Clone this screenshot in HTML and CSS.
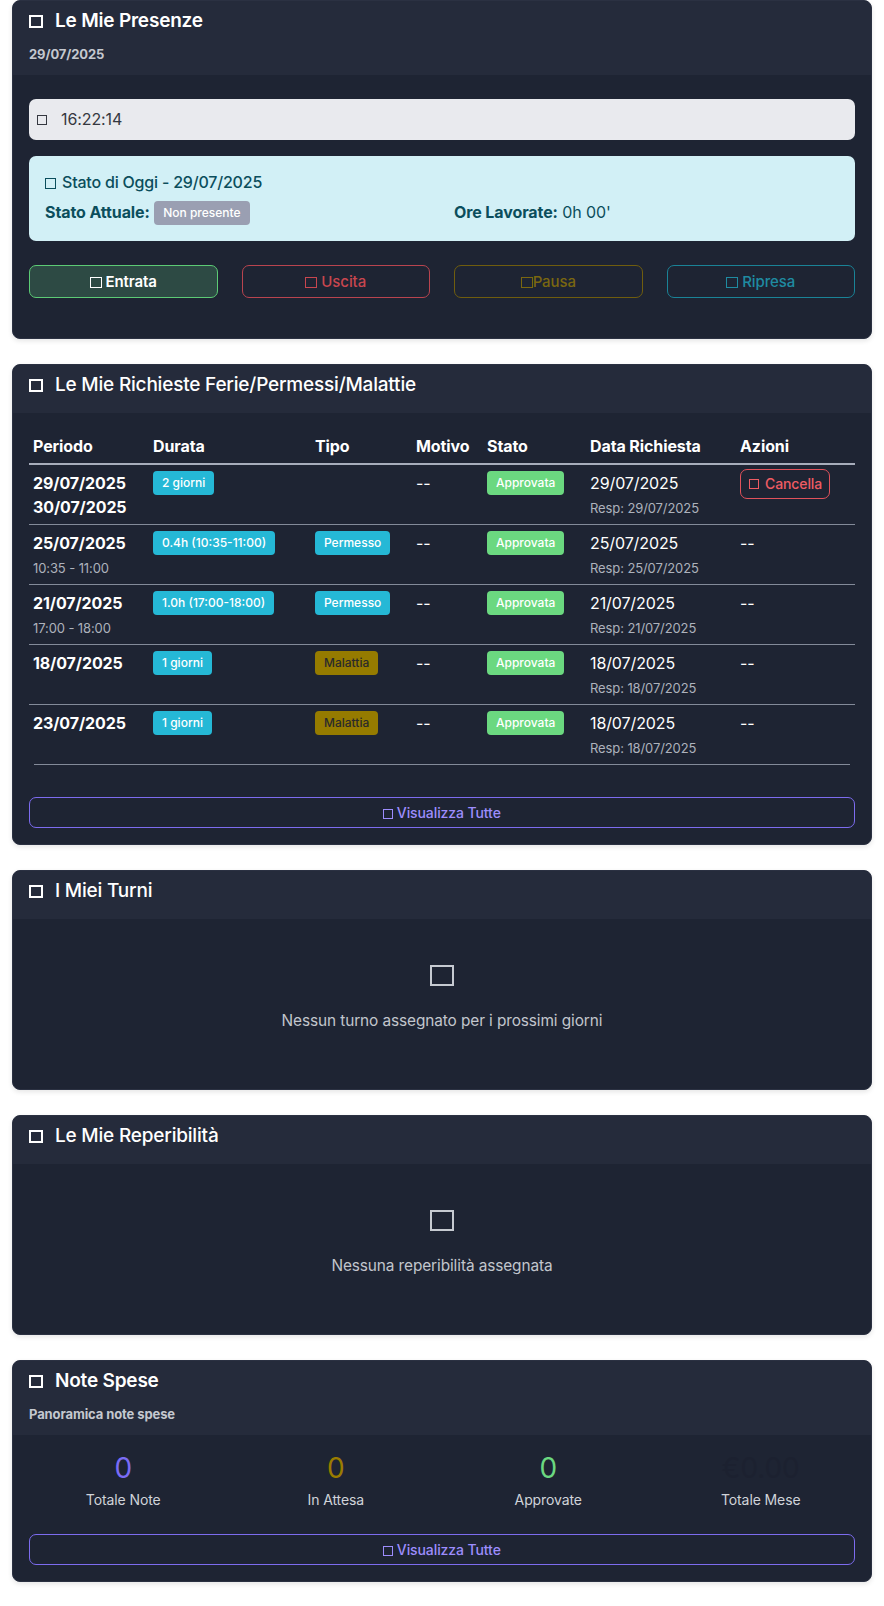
FILE: index.html
```html
<!DOCTYPE html>
<html lang="it">
<head>
<meta charset="utf-8">
<title>Dashboard Dipendente</title>
<link rel="stylesheet" href="styles.css">
</head>
<body>
<main class="page">

  <section class="card">
    <header class="card-header">
      <h5 class="card-title title-strong"><span class="ico ico-title"></span>Le Mie Presenze</h5>
      <p class="card-sub">29/07/2025</p>
    </header>
    <div class="card-body body-lg">
      <div class="clock"><span class="ico ico-clock"></span>16:22:14</div>
      <div class="alert">
        <h6 class="alert-title"><span class="ico ico-alert"></span>Stato di Oggi - 29/07/2025</h6>
        <div class="alert-row">
          <div><strong>Stato Attuale:</strong> <span class="badge badge-gray">Non presente</span></div>
          <div><strong>Ore Lavorate:</strong> 0h 00'</div>
        </div>
      </div>
      <div class="grid4 btn-row">
        <button class="btn btn-entrata"><span class="ico ico-btn"></span> Entrata</button>
        <button class="btn btn-uscita"><span class="ico ico-btn"></span> Uscita</button>
        <button class="btn btn-pausa"><span class="ico ico-btn"></span>Pausa</button>
        <button class="btn btn-ripresa"><span class="ico ico-btn"></span> Ripresa</button>
      </div>
    </div>
  </section>

  <section class="card">
    <header class="card-header">
      <h5 class="card-title"><span class="ico ico-title"></span>Le Mie Richieste Ferie/Permessi/Malattie</h5>
    </header>
    <div class="card-body">
      <table class="table">
        <colgroup>
          <col class="c-periodo"><col class="c-durata"><col class="c-tipo"><col class="c-motivo"><col class="c-stato"><col class="c-data"><col class="c-azioni">
        </colgroup>
        <thead>
          <tr><th>Periodo</th><th>Durata</th><th>Tipo</th><th>Motivo</th><th>Stato</th><th>Data Richiesta</th><th>Azioni</th></tr>
        </thead>
        <tbody>
          <tr>
            <td><strong>29/07/2025</strong><br><strong>30/07/2025</strong></td>
            <td><span class="badge badge-info">2 giorni</span></td>
            <td></td>
            <td>--</td>
            <td><span class="badge badge-success">Approvata</span></td>
            <td>29/07/2025<br><small class="muted">Resp: 29/07/2025</small></td>
            <td><button class="btn-cancel"><span class="ico ico-cancel"></span>Cancella</button></td>
          </tr>
          <tr>
            <td><strong>25/07/2025</strong><br><small class="muted">10:35 - 11:00</small></td>
            <td><span class="badge badge-info">0.4h (10:35-11:00)</span></td>
            <td><span class="badge badge-info">Permesso</span></td>
            <td>--</td>
            <td><span class="badge badge-success">Approvata</span></td>
            <td>25/07/2025<br><small class="muted">Resp: 25/07/2025</small></td>
            <td>--</td>
          </tr>
          <tr>
            <td><strong>21/07/2025</strong><br><small class="muted">17:00 - 18:00</small></td>
            <td><span class="badge badge-info">1.0h (17:00-18:00)</span></td>
            <td><span class="badge badge-info">Permesso</span></td>
            <td>--</td>
            <td><span class="badge badge-success">Approvata</span></td>
            <td>21/07/2025<br><small class="muted">Resp: 21/07/2025</small></td>
            <td>--</td>
          </tr>
          <tr>
            <td><strong>18/07/2025</strong></td>
            <td><span class="badge badge-info">1 giorni</span></td>
            <td><span class="badge badge-warning">Malattia</span></td>
            <td>--</td>
            <td><span class="badge badge-success">Approvata</span></td>
            <td>18/07/2025<br><small class="muted">Resp: 18/07/2025</small></td>
            <td>--</td>
          </tr>
          <tr>
            <td><strong>23/07/2025</strong></td>
            <td><span class="badge badge-info">1 giorni</span></td>
            <td><span class="badge badge-warning">Malattia</span></td>
            <td>--</td>
            <td><span class="badge badge-success">Approvata</span></td>
            <td>18/07/2025<br><small class="muted">Resp: 18/07/2025</small></td>
            <td>--</td>
          </tr>
        </tbody>
      </table>
      <div class="table-end"></div>
      <button class="btn-outline-purple"><span class="ico ico-sm"></span> Visualizza Tutte</button>
    </div>
  </section>

  <section class="card">
    <header class="card-header">
      <h5 class="card-title"><span class="ico ico-title"></span>I Miei Turni</h5>
    </header>
    <div class="card-body">
      <div class="empty">
        <div class="empty-icon"><span class="ico-big"></span></div>
        <p class="empty-text">Nessun turno assegnato per i prossimi giorni</p>
      </div>
    </div>
  </section>

  <section class="card">
    <header class="card-header">
      <h5 class="card-title"><span class="ico ico-title"></span>Le Mie Reperibilità</h5>
    </header>
    <div class="card-body">
      <div class="empty">
        <div class="empty-icon"><span class="ico-big"></span></div>
        <p class="empty-text">Nessuna reperibilità assegnata</p>
      </div>
    </div>
  </section>

  <section class="card">
    <header class="card-header">
      <h5 class="card-title title-strong"><span class="ico ico-title"></span>Note Spese</h5>
      <p class="card-sub">Panoramica note spese</p>
    </header>
    <div class="card-body">
      <div class="grid4 stats">
        <div class="stat"><div class="stat-value v-purple">0</div><div class="stat-label">Totale Note</div></div>
        <div class="stat"><div class="stat-value v-yellow">0</div><div class="stat-label">In Attesa</div></div>
        <div class="stat"><div class="stat-value v-green">0</div><div class="stat-label">Approvate</div></div>
        <div class="stat"><div class="stat-value v-dark">€0.00</div><div class="stat-label">Totale Mese</div></div>
      </div>
      <button class="btn-outline-purple"><span class="ico ico-sm"></span> Visualizza Tutte</button>
    </div>
  </section>

</main>
</body>
</html>
```

FILE: styles.css
```css
* { box-sizing: border-box; }

html, body {
  margin: 0;
  background: #ffffff;
}

body {
  font-family: Inter, "Noto Sans", "Liberation Sans", sans-serif;
  font-size: 16px;
  line-height: 1.5;
  color: #ffffff;
  letter-spacing: -0.1px;
}

.page {
  padding: 0 12px;
}

/* ---------- cards ---------- */
.card {
  background: #1e2433;
  border: 1px solid #2b3142;
  border-radius: 8px;
  margin-bottom: 25px;
  overflow: hidden;
  box-shadow: 0 2px 5px rgba(0, 0, 0, 0.10);
}

.card-header {
  background: #252b3b;
  padding: 8px 16px;
}

.card-title {
  margin: 0 0 8px;
  font-size: 19px;
  line-height: 24px;
  font-weight: 500;
  letter-spacing: -0.2px;
  color: #ffffff;
}

.title-strong { font-weight: 600; }

.card-sub {
  margin: 0;
  font-size: 13px;
  line-height: 26px;
  font-weight: 700;
  color: #c4c8cf;
}

.card-body {
  padding: 16px;
}

.body-lg {
  padding: 24px 16px;
}

/* ---------- tofu icons ---------- */
.ico {
  display: inline-block;
  width: 0.7em;
  height: 0.68em;
  border: 0.11em solid currentColor;
  vertical-align: -0.02em;
}

.ico-title {
  width: 14px;
  height: 13px;
  border-width: 2px;
  margin-right: 12px;
  vertical-align: -1px;
}

.ico-clock {
  width: 10px;
  height: 10px;
  border-width: 1.5px;
  margin-right: 14px;
  vertical-align: 0;
}

.ico-alert {
  width: 11px;
  height: 11px;
  border-width: 1.5px;
  margin-right: 6px;
  vertical-align: -1px;
}

.ico-btn {
  width: 12px;
  height: 11px;
  border-width: 1.7px;
  vertical-align: -1px;
}

.ico-cancel {
  width: 10px;
  height: 10px;
  border-width: 1.5px;
  margin-right: 6px;
  vertical-align: -1px;
}

.ico-sm {
  width: 10px;
  height: 10px;
  border-width: 1.5px;
  vertical-align: -1px;
}

/* ---------- presenze ---------- */
.clock {
  background: #e9eaee;
  color: #353840;
  border-radius: 7px;
  padding: 8px 8px;
  line-height: 25px;
  margin-bottom: 16px;
}

.alert {
  background: #d2f0f6;
  color: #0b4e5c;
  border-radius: 7px;
  padding: 16px;
  margin-bottom: 24px;
}

.alert-title {
  margin: 0 0 8px;
  font-size: 16px;
  line-height: 20px;
  font-weight: 500;
  letter-spacing: -0.2px;
}

.alert-row {
  display: grid;
  grid-template-columns: 1fr 1fr;
  column-gap: 24px;
  line-height: 25px;
}

.alert-row strong { font-weight: 700; }

.grid4 {
  display: grid;
  grid-template-columns: repeat(4, 1fr);
  column-gap: 24px;
}

.btn-row { margin-bottom: 16px; }

.btn {
  font-family: inherit;
  font-size: 15px;
  line-height: 23px;
  font-weight: 600;
  letter-spacing: -0.1px;
  padding: 4px 12px;
  border-radius: 7px;
  background: transparent;
  border: 1px solid;
  text-align: center;
}

.btn-entrata { background: #2d4a44; border-color: #5ccb75; color: #ffffff; }
.btn-uscita { border-color: #b9444f; color: #c8464f; font-weight: 500; }
.btn-pausa { border-color: #6f5d0e; color: #7a6710; font-weight: 500; }
.btn-ripresa { border-color: #1a8397; color: #1f8ba1; font-weight: 500; }

/* ---------- badges ---------- */
.badge {
  display: inline-block;
  font-size: 12px;
  line-height: 12px;
  font-weight: 500;
  padding: 6px 9px;
  border-radius: 4px;
  vertical-align: top;
  white-space: nowrap;
  letter-spacing: 0;
}

.badge-gray { background: #9a9fb2; color: #ffffff; margin-top: 1px; }
.badge-info { background: #25b8d6; color: #ffffff; }
.badge-success { background: #6bd880; color: #ffffff; }
.badge-warning { background: #957b00; color: #2a2a2a; }

/* ---------- table ---------- */
.table {
  width: 100%;
  border-collapse: collapse;
  table-layout: fixed;
}

.c-periodo { width: 120px; }
.c-durata { width: 162px; }
.c-tipo { width: 101px; }
.c-motivo { width: 71px; }
.c-stato { width: 103px; }
.c-data { width: 150px; }
.c-azioni { width: 119px; }

.table th {
  text-align: left;
  font-weight: 700;
  padding: 5px 4px;
  border-bottom: 2px solid #a7adbb;
  line-height: 24px;
}

.table td {
  padding: 6px 4px 5px;
  vertical-align: top;
  border-bottom: 1px solid #838a99;
  line-height: 24px;
}

.table tbody tr:last-child td { border-bottom: none; }

.table strong { font-weight: 700; }

.muted {
  font-size: 13px;
  line-height: 1;
  color: #adb2bc;
}

.table-end {
  height: 1px;
  background: #838a99;
  margin: 0 5px 32px;
}

.btn-cancel {
  display: inline-flex;
  align-items: center;
  font-family: inherit;
  font-size: 14px;
  line-height: 21px;
  font-weight: 500;
  letter-spacing: -0.1px;
  color: #ee5c63;
  background: transparent;
  border: 1px solid #e0525b;
  border-radius: 7px;
  padding: 3px 7px 4px 8px;
  vertical-align: top;
  margin: -2px 0 -4px;
}

.btn-outline-purple {
  display: block;
  width: 100%;
  font-family: inherit;
  font-size: 14px;
  line-height: 21px;
  font-weight: 500;
  letter-spacing: -0.1px;
  color: #9d8dfd;
  background: transparent;
  border: 1px solid #7d6cef;
  border-radius: 7px;
  padding: 4px 8px;
  text-align: center;
}

/* ---------- empty states ---------- */
.empty {
  text-align: center;
  padding: 24px 0;
}

.empty-icon {
  height: 32px;
  display: flex;
  align-items: center;
  justify-content: center;
  margin-bottom: 18px;
}

.ico-big {
  display: block;
  width: 24px;
  height: 21px;
  border: 2.5px solid #c6cad1;
}

.empty-text {
  margin: 0 0 16px;
  font-size: 15.4px;
  line-height: 24px;
  color: #c2c6cd;
}

/* ---------- stats ---------- */
.stats {
  margin-bottom: 24px;
  text-align: center;
}

.stat-value {
  font-size: 28px;
  line-height: 34px;
  font-weight: 400;
  margin-bottom: 4px;
}

.v-purple { color: #7a6cf5; }
.v-yellow { color: #9a7c00; }
.v-green { color: #6bd880; }
.v-dark { color: #1c2130; }

.stat-label {
  font-size: 14px;
  line-height: 21px;
  color: #d0d3d9;
}
```
